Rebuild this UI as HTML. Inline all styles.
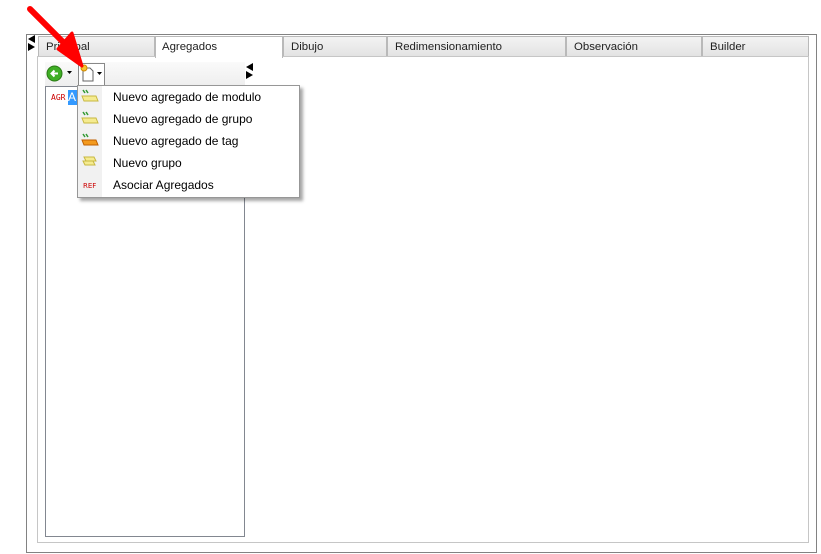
<!DOCTYPE html>
<html><head><meta charset="utf-8"><style>
body{margin:0;width:821px;height:554px;background:#fff;position:relative;overflow:hidden;font-family:"Liberation Sans",sans-serif;font-size:12px;color:#000}
.a{position:absolute}
.tab{position:absolute;top:36px;height:20px;background:linear-gradient(#f3f3f3,#e3e3e3);border:1px solid #b9b9b9;border-bottom:none;line-height:21px;padding-left:7px;box-sizing:border-box;font-size:11.4px;color:#222}
.mi{position:absolute;left:113px;font-size:12px}
</style></head><body>
<div class="a" style="left:26px;top:34px;width:791px;height:519px;border:1px solid #828282;box-sizing:border-box"></div>
<div class="a" style="left:37px;top:56px;width:772px;height:487px;border:1px solid #c6c6c6;box-sizing:border-box"></div>
<div class="tab" style="left:38px;width:117px">Principal</div>
<div class="tab" style="left:155px;width:128px;background:#fff;height:22px;padding-left:6px">Agregados</div>
<div class="tab" style="left:283px;width:104px">Dibujo</div>
<div class="tab" style="left:387px;width:179px">Redimensionamiento</div>
<div class="tab" style="left:566px;width:136px">Observación</div>
<div class="tab" style="left:702px;width:107px">Builder</div>
<svg class="a" style="left:27px;top:34px" width="10" height="18"><path d="M8 1L1 5L8 9Z" fill="#000"/><path d="M1 9L8 13L1 17Z" fill="#000"/></svg>
<svg class="a" style="left:245px;top:62px" width="10" height="18"><path d="M8 1L1 5L8 9Z" fill="#000"/><path d="M1 9L8 13L1 17Z" fill="#000"/></svg>
<div class="a" style="left:45px;top:86px;width:200px;height:451px;border:1px solid #828790;box-sizing:border-box"></div>
<div class="a" style="left:45px;top:62px;width:200px;height:24px;background:linear-gradient(#fafafa,#eee)"></div>
<svg class="a" style="left:46px;top:65px" width="18" height="18"><circle cx="8.5" cy="8.5" r="7.5" fill="#3fae25" stroke="#2a7a15"/><path d="M12 8.5H6M8.5 5.5L5.5 8.5L8.5 11.5" stroke="#fff" stroke-width="2" fill="none"/></svg>
<svg class="a" style="left:67px;top:71px" width="6" height="4"><path d="M0 0H5L2.5 3Z"/></svg>
<div class="a" style="left:78px;top:63px;width:27px;height:22px;border:1px solid #888;border-bottom:none;box-sizing:border-box;background:#fff"></div>
<svg class="a" style="left:79px;top:64px" width="26" height="20"><path d="M4 4H11L14 7V17H4Z" fill="#fff" stroke="#666"/><circle cx="5" cy="4" r="3" fill="#f5c330" stroke="#d08a00"/><path d="M18 8H23L20.5 11Z"/></svg>
<div class="a" style="left:51px;top:93px;font-size:8px;color:#c00;font-family:'DejaVu Sans Mono',monospace">AGR</div>
<div class="a" style="left:68px;top:90px;width:10px;height:15px;background:#3399ff;color:#fff;font-size:12px;line-height:15px">A</div>
<div class="a" style="left:77px;top:85px;width:223px;height:113px;background:#fff;border:1px solid #979797;box-sizing:border-box;box-shadow:3px 3px 3px rgba(0,0,0,.35)"></div>
<div class="a" style="left:78px;top:86px;width:24px;height:111px;background:#f1f1f1"></div>
<svg class="a" style="left:80px;top:88px" width="20" height="106">
<g><path d="M3 2l2 3M6 2l2 3" stroke="#393" stroke-width="1.5"/><path d="M2 8H16L18 13H4Z" fill="#f5eb90" stroke="#c8b840"/></g>
<g transform="translate(0,22)"><path d="M3 2l2 3M6 2l2 3" stroke="#393" stroke-width="1.5"/><path d="M2 8H16L18 13H4Z" fill="#f5eb90" stroke="#c8b840"/></g>
<g transform="translate(0,44)"><path d="M3 2l2 3M6 2l2 3" stroke="#393" stroke-width="1.5"/><path d="M2 8H16L18 13H4Z" fill="#f39a1e" stroke="#c06000"/></g>
<g transform="translate(0,66)"><path d="M4 3H14L16 7H6Z M3 7H13L15 11H5Z" fill="#f5eb90" stroke="#c8b840"/></g>
<text x="3" y="100" font-size="7" fill="#c00" font-family="DejaVu Sans">REF</text>
</svg>
<div class="mi" style="top:90px">Nuevo agregado de modulo</div>
<div class="mi" style="top:112px">Nuevo agregado de grupo</div>
<div class="mi" style="top:134px">Nuevo agregado de tag</div>
<div class="mi" style="top:156px">Nuevo grupo</div>
<div class="mi" style="top:178px">Asociar Agregados</div>
<svg class="a" style="left:0;top:0" width="100" height="80"><path d="M30 9L76 55" stroke="#f00" stroke-width="6" stroke-linecap="round"/><path d="M58 49L82 66L72 33Z" fill="#f00" stroke="#f00" stroke-width="3" stroke-linejoin="round"/></svg>
</body></html>
